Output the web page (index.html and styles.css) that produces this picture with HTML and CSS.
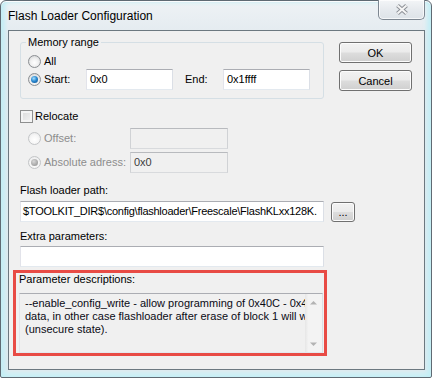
FILE: index.html
```html
<!DOCTYPE html>
<html>
<head>
    <meta charset="UTF-8">
    <title>Flash Loader Configuration</title>
    <link rel="stylesheet" href="styles.css">
</head>
<body>
    <div class="window">
        <div class="titlebar">
            <span class="title">Flash Loader Configuration</span>
            <div class="close-btn">
                <svg width="14" height="11" viewBox="0 0 14 11">
                    <line x1="2.5" y1="1.5" x2="11.5" y2="9.5" stroke="#8c9096" stroke-width="4"/>
                    <line x1="11.5" y1="1.5" x2="2.5" y2="9.5" stroke="#8c9096" stroke-width="4"/>
                    <line x1="2.5" y1="1.5" x2="11.5" y2="9.5" stroke="#f6f6f6" stroke-width="2"/>
                    <line x1="11.5" y1="1.5" x2="2.5" y2="9.5" stroke="#f6f6f6" stroke-width="2"/>
                </svg>
            </div>
        </div>

        <div class="client">
            <div class="top-row">
                <fieldset class="group">
                    <legend>Memory range</legend>
                    <div class="row">
                        <span class="radio"></span>
                        <span>All</span>
                    </div>
                    <div class="row row-start">
                        <span class="radio checked"></span>
                        <span class="lbl-start">Start:</span>
                        <div class="edit small">0x0</div>
                        <span class="lbl-end">End:</span>
                        <div class="edit small">0x1ffff</div>
                    </div>
                </fieldset>
                <div class="buttons">
                    <button class="btn">OK</button>
                    <button class="btn">Cancel</button>
                </div>
            </div>

            <div class="row check-row">
                <span class="checkbox"></span>
                <span>Relocate</span>
            </div>
            <div class="row sub-row offset-row">
                <span class="radio disabled"></span>
                <span class="lbl-sub disabled-text">Offset:</span>
                <div class="edit medium disabled"></div>
            </div>
            <div class="row sub-row abs-row">
                <span class="radio disabled checked"></span>
                <span class="lbl-sub disabled-text">Absolute adress:</span>
                <div class="edit medium disabled">0x0</div>
            </div>

            <div class="caption path-caption">Flash loader path:</div>
            <div class="row path-row">
                <div class="edit wide path">$TOOLKIT_DIR$\config\flashloader\Freescale\FlashKLxx128K.</div>
                <button class="btn browse">...</button>
            </div>

            <div class="caption extra-caption">Extra parameters:</div>
            <div class="edit wide extra"></div>

            <!-- выделенная область -->
            <div class="highlight">
                <div class="caption">Parameter descriptions:</div>
                <div class="memo">
                    <div class="memo-text">
                        <div>--enable_config_write - allow programming of 0x40C - 0x40F</div>
                        <div>data, in other case flashloader after erase of block 1 will write</div>
                        <div>(unsecure state).</div>
                    </div>
                    <div class="scrollbar">
                        <svg width="17" height="17" viewBox="0 0 17 17"><path d="M5 10.5 L8.5 7 L12 10.5 Z" fill="#b3b3b3"/></svg>
                        <svg width="17" height="17" viewBox="0 0 17 17"><path d="M5 7.5 L8.5 11 L12 7.5 Z" fill="#b3b3b3"/></svg>
                    </div>
                </div>
            </div>
        </div>
    </div>
</body>
</html>
```

FILE: styles.css
```css
body {
    margin: 0;
    font-family: "Liberation Sans", Arial, sans-serif;
    font-size: 11px;
    color: #000;
}

.window {
    width: 432px;
    height: 378px;
    box-sizing: border-box;
    display: flex;
    flex-direction: column;
    border: 1px solid #5f6a73;
    border-radius: 6px 6px 2px 2px;
    background: linear-gradient(180deg, #eef2f5 0%, #e2eaef 10%, #dfe9ee 100%);
    box-shadow: inset 0 1px 0 #fafcfd, inset 4px 0 5px #c4eef5, inset -4px 0 5px #c4eef5, inset 0 -4px 5px #cdf2f7;
}

.titlebar {
    height: 29px;
    display: flex;
    justify-content: space-between;
    align-items: center;
    padding-left: 7px;
}

.title {
    font-size: 12px;
    color: #000;
}

.close-btn {
    align-self: flex-start;
    margin-top: -1px;
    margin-right: 6px;
    width: 47px;
    height: 20px;
    box-sizing: border-box;
    border: 1px solid #7d8791;
    border-top: none;
    border-radius: 0 0 5px 5px;
    background: linear-gradient(180deg, #f3f5f7 0%, #e6eaee 50%, #dde3e8 100%);
    box-shadow: inset 0 0 0 1px rgba(255, 255, 255, 0.7);
    display: flex;
    justify-content: center;
    align-items: center;
}

.client {
    flex: 1;
    margin: 0 6px 7px 7px;
    border: 1px solid #6c7880;
    background: #f0f0f0;
    padding: 5px 0 0 11px;
}

.top-row {
    display: flex;
}

.group {
    width: 304px;
    box-sizing: border-box;
    margin: 0;
    border: 1px solid #d5dfe5;
    border-radius: 3px;
    padding: 6px 7px 8px 7px;
}

.group legend {
    padding: 0 2px;
    margin-left: -2px;
    line-height: 13px;
}

.row {
    display: flex;
    align-items: center;
    line-height: 13px;
}

.row-start {
    margin-top: 1px;
}

.radio {
    width: 13px;
    height: 13px;
    box-sizing: border-box;
    border-radius: 50%;
    border: 1px solid #8b8e92;
    background: radial-gradient(circle at 50% 60%, #ffffff 0%, #f0f0f0 45%, #c9cbcd 100%);
    margin-right: 3px;
    flex-shrink: 0;
    position: relative;
}

.radio.checked::after {
    content: "";
    position: absolute;
    left: 2px;
    top: 2px;
    width: 7px;
    height: 7px;
    border-radius: 50%;
    background: radial-gradient(circle at 40% 35%, #a8e0ff 0%, #2b8ad1 45%, #0c4b8a 100%);
}

.radio.disabled {
    border-color: #c3c5c7;
    background: radial-gradient(circle at 50% 60%, #ffffff 0%, #f6f6f6 50%, #e2e3e4 100%);
}

.radio.disabled.checked::after {
    background: radial-gradient(circle at 40% 35%, #d8d8d8 0%, #a9a9a9 60%, #8f8f8f 100%);
}

.checkbox {
    width: 13px;
    height: 13px;
    box-sizing: border-box;
    border: 1px solid #8e8f8f;
    background: linear-gradient(135deg, #d9d9d9 0%, #f4f4f4 100%);
    box-shadow: inset 0 0 0 2px #f4f4f4;
    margin-right: 2px;
}

.lbl-start {
    width: 42px;
}

.lbl-end {
    margin-left: 12px;
    width: 38px;
}

.edit {
    height: 21px;
    box-sizing: border-box;
    border: 1px solid;
    border-color: #abadb3 #dbdfe6 #e3e9ef #e2e3ea;
    background: #fff;
    padding-left: 3px;
    line-height: 19px;
    white-space: nowrap;
    overflow: hidden;
}

.edit.small {
    width: 87px;
}

.edit.medium {
    width: 98px;
}

.edit.wide {
    width: 304px;
}

.edit.path {
    padding-left: 2px;
    letter-spacing: -0.25px;
}

.edit.disabled {
    background: #f0f0f0;
    border-color: #b8babe #d0d2d5 #d8dadd #d0d2d5;
    color: #3c3c3c;
}

.disabled-text {
    color: #8d8d8d;
}

.buttons {
    margin-left: 15px;
    padding-top: 6px;
    display: flex;
    flex-direction: column;
    gap: 7px;
}

.btn {
    width: 73px;
    height: 21px;
    padding: 0;
    font-family: "Liberation Sans", Arial, sans-serif;
    font-size: 11px;
    color: #000;
    border: 1px solid #707070;
    border-radius: 3px;
    background: linear-gradient(180deg, #f2f2f2 0%, #ebebeb 48%, #dddddd 52%, #cfcfcf 100%);
    box-shadow: inset 0 0 0 1px #fcfcfc;
}

.check-row {
    margin-top: 11px;
}

.sub-row {
    padding-left: 8px;
}

.offset-row {
    margin-top: 5px;
}

.abs-row {
    margin-top: 3px;
}

.lbl-sub {
    width: 86px;
}

.caption {
    line-height: 13px;
}

.path-caption {
    margin-top: 11px;
}

.path-row {
    margin-top: 4px;
}

.btn.browse {
    width: 24px;
    height: 20px;
    margin-left: 7px;
    margin-top: 1px;
    line-height: 12px;
}

.extra-caption {
    margin-top: 8px;
}

.extra {
    margin-top: 3px;
}

.highlight {
    width: 314px;
    box-sizing: border-box;
    margin: 3px 0 0 -7px;
    border: 3px solid #e84b45;
    padding: 0 1px 0 3px;
}

.memo {
    margin-top: 7px;
    width: 304px;
    height: 60px;
    box-sizing: border-box;
    border: 1px solid #abadb3;
    border-color: #abadb3 #dbdfe6 #e3e9ef #e2e3ea;
    background: #f0f0f0;
    display: flex;
}

.memo-text {
    flex: 1;
    padding: 3px 0 0 5px;
    line-height: 13px;
    white-space: nowrap;
    overflow: hidden;
    color: #0a0a14;
}

.scrollbar {
    width: 17px;
    flex-shrink: 0;
    display: flex;
    flex-direction: column;
    justify-content: space-between;
    background: linear-gradient(90deg, #e6e6e6 0%, #f3f3f3 20%, #f3f3f3 100%);
}
```
